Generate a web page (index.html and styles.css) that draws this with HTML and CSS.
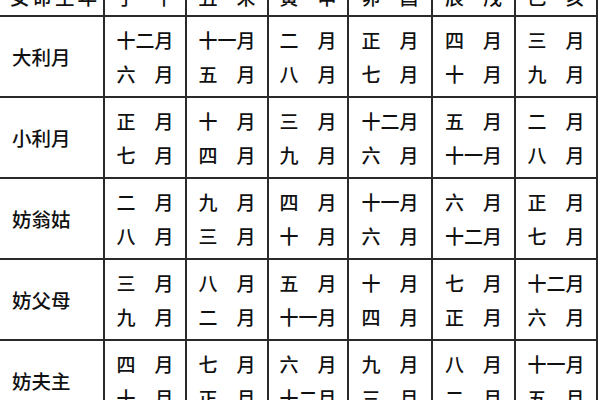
FILE: index.html
```html
<!DOCTYPE html>
<html lang="zh">
<head>
<meta charset="utf-8">
<link rel="stylesheet" href="styles.css">
</head>
<body>
<div class="grid">
  <div class="cell head label">女命生年</div>
  <div class="cell head">子　午</div>
  <div class="cell head">丑　未</div>
  <div class="cell head">寅　申</div>
  <div class="cell head">卯　酉</div>
  <div class="cell head">辰　戌</div>
  <div class="cell head">巳　亥</div>

  <div class="cell label">大利月</div>
  <div class="cell data"><span>十二月</span><span>六　月</span></div>
  <div class="cell data"><span>十一月</span><span>五　月</span></div>
  <div class="cell data"><span>二　月</span><span>八　月</span></div>
  <div class="cell data"><span>正　月</span><span>七　月</span></div>
  <div class="cell data"><span>四　月</span><span>十　月</span></div>
  <div class="cell data"><span>三　月</span><span>九　月</span></div>

  <div class="cell label">小利月</div>
  <div class="cell data"><span>正　月</span><span>七　月</span></div>
  <div class="cell data"><span>十　月</span><span>四　月</span></div>
  <div class="cell data"><span>三　月</span><span>九　月</span></div>
  <div class="cell data"><span>十二月</span><span>六　月</span></div>
  <div class="cell data"><span>五　月</span><span>十一月</span></div>
  <div class="cell data"><span>二　月</span><span>八　月</span></div>

  <div class="cell label">妨翁姑</div>
  <div class="cell data"><span>二　月</span><span>八　月</span></div>
  <div class="cell data"><span>九　月</span><span>三　月</span></div>
  <div class="cell data"><span>四　月</span><span>十　月</span></div>
  <div class="cell data"><span>十一月</span><span>六　月</span></div>
  <div class="cell data"><span>六　月</span><span>十二月</span></div>
  <div class="cell data"><span>正　月</span><span>七　月</span></div>

  <div class="cell label">妨父母</div>
  <div class="cell data"><span>三　月</span><span>九　月</span></div>
  <div class="cell data"><span>八　月</span><span>二　月</span></div>
  <div class="cell data"><span>五　月</span><span>十一月</span></div>
  <div class="cell data"><span>十　月</span><span>四　月</span></div>
  <div class="cell data"><span>七　月</span><span>正　月</span></div>
  <div class="cell data"><span>十二月</span><span>六　月</span></div>

  <div class="cell label">妨夫主</div>
  <div class="cell data"><span>四　月</span><span>十　月</span></div>
  <div class="cell data"><span>七　月</span><span>正　月</span></div>
  <div class="cell data"><span>六　月</span><span>十二月</span></div>
  <div class="cell data"><span>九　月</span><span>三　月</span></div>
  <div class="cell data"><span>八　月</span><span>二　月</span></div>
  <div class="cell data"><span>十一月</span><span>五　月</span></div>
</div>
</body>
</html>
```
FILE: styles.css
```css
html, body {
  margin: 0;
  padding: 0;
  background: #ffffff;
  overflow: hidden;
}
body {
  width: 600px;
  height: 400px;
  font-family: "Noto Sans CJK SC", "Noto Sans CJK JP", sans-serif;
  font-weight: 500;
  color: #111111;
}
.grid {
  display: grid;
  grid-template-columns: 103px 80px 80px 78px 82px 81px 80px;
  grid-template-rows: 38px repeat(5, 79px);
  gap: 2px;
  padding: 2px;
  background: #2a2a2a;
  width: max-content;
  margin-left: -2px;
  margin-top: -25px;
}
.cell {
  background: #ffffff;
  font-size: 19px;
  display: flex;
  align-items: center;
  justify-content: center;
}
.label {
  justify-content: flex-start;
  padding-left: 12px;
  font-size: 19.5px;
}
.head.label {
  padding-left: 10px;
  letter-spacing: 3px;
}
.data {
  flex-direction: column;
  line-height: 34px;
}
.data span {
  display: block;
  white-space: nowrap;
}
```
